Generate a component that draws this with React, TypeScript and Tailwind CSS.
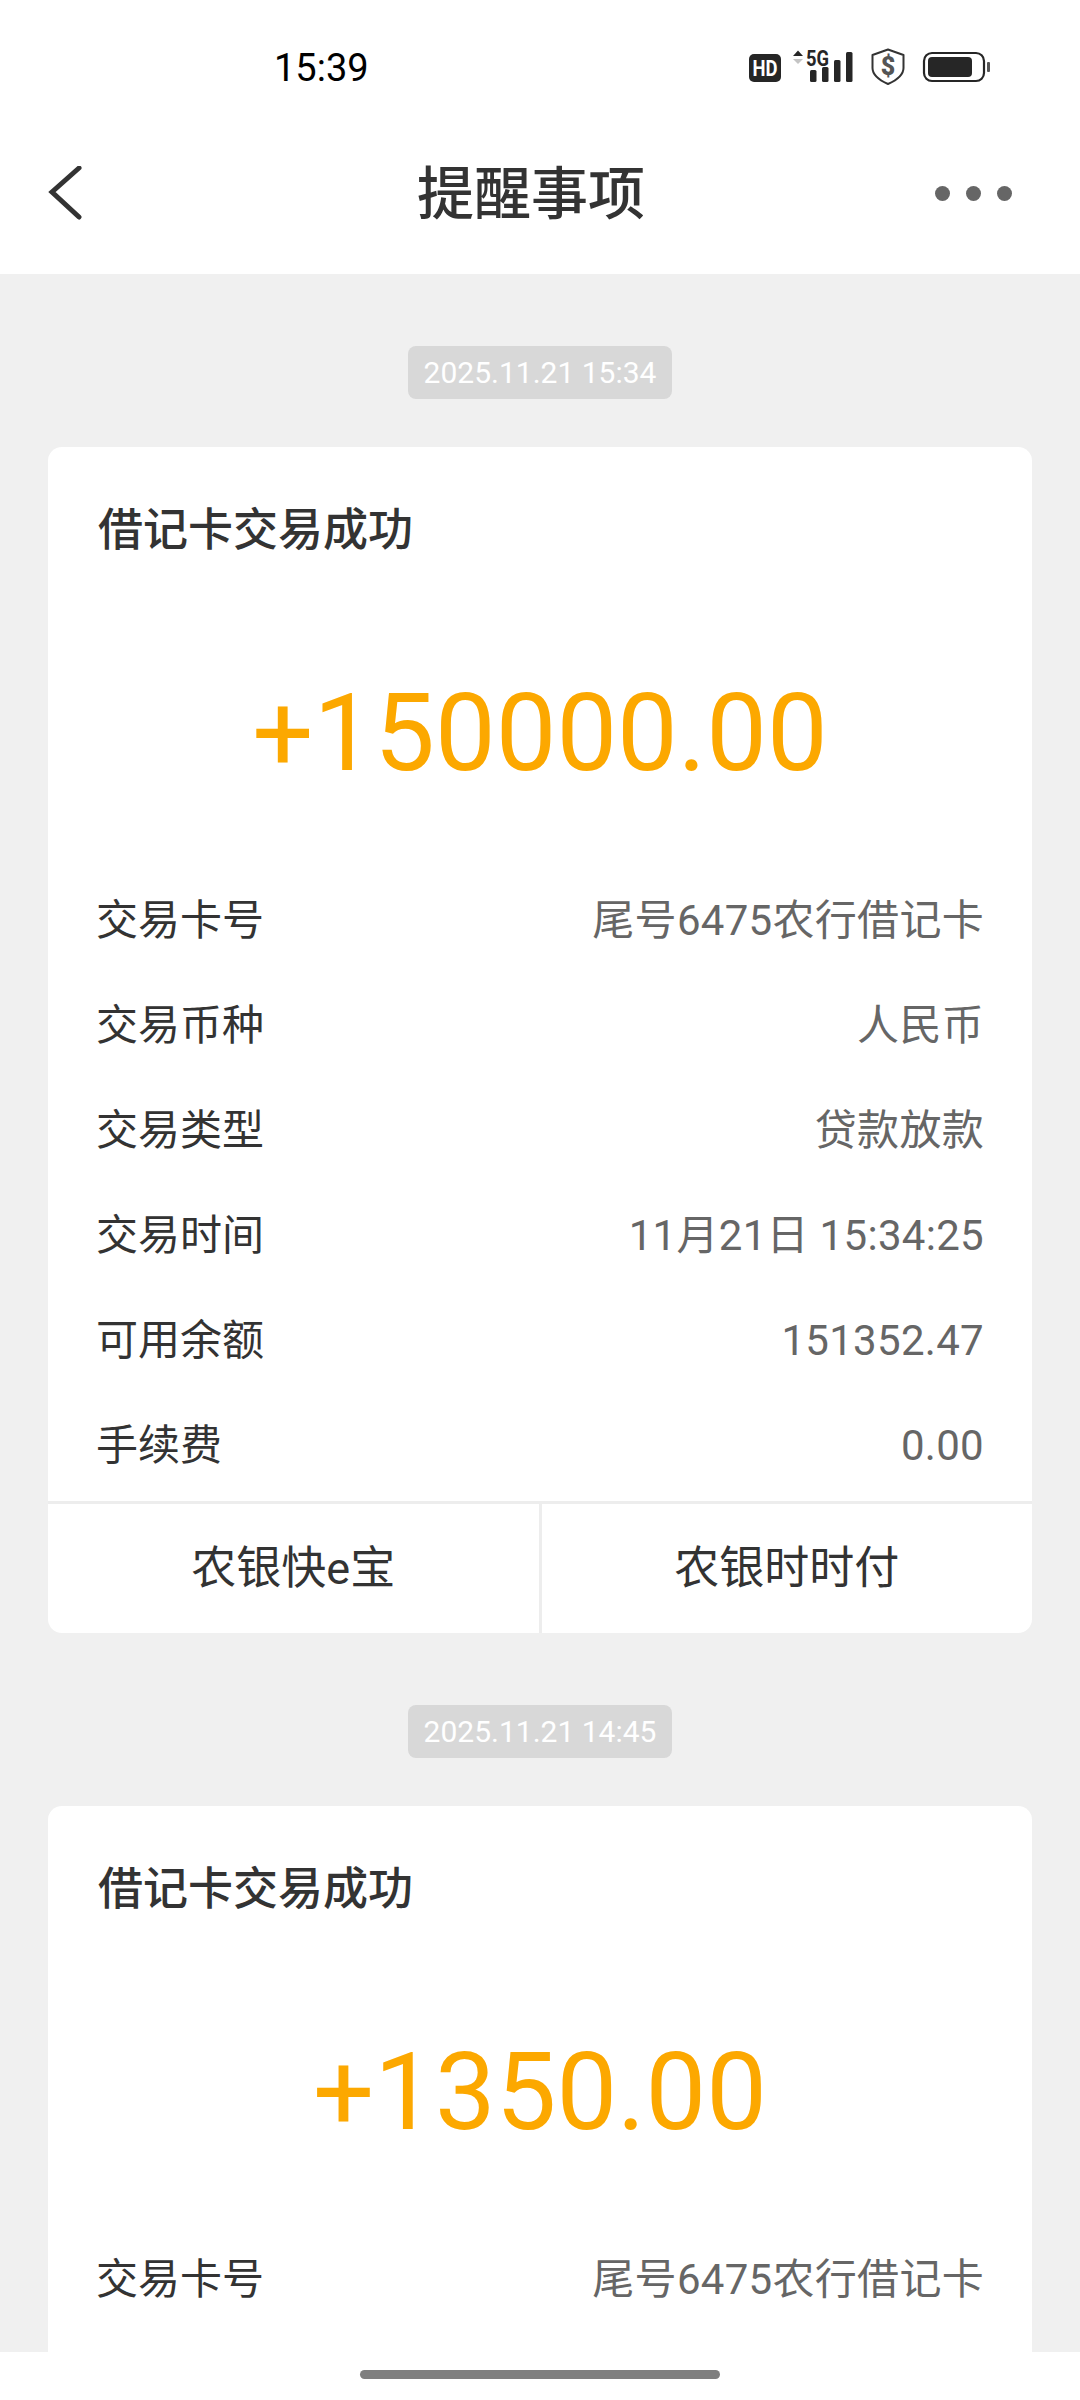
const CJK = "font-['Roboto','Noto_Sans_CJK_SC',sans-serif]";

function Row({ label, value }: { label: string; value: string }) {
  return (
    <div className="flex h-[105px] items-center justify-between pr-[48px] pl-[48px]">
      <span className="text-[42px] leading-none text-[#333333]">{label}</span>
      <span className="text-[42px] leading-none tracking-[0.3px] text-[#666666]">{value}</span>
    </div>
  );
}

function Chip({ text }: { text: string }) {
  return (
    <div className="flex justify-center">
      <div className="flex h-[53px] w-[264px] items-center justify-center rounded-[8px] bg-[#d8d8d8] pt-[1px] text-[30px] leading-none text-white">
        {text}
      </div>
    </div>
  );
}

function Card({ amount, rows, actions }: { amount: string; rows: [string, string][]; actions: boolean }) {
  return (
    <div className="mx-[48px] overflow-hidden rounded-[14px] bg-white">
      <div className="flex h-[166px] items-center px-[50px] text-[45px] leading-none font-medium text-[#333333]">借记卡交易成功</div>
      <div className="flex h-[234px] items-center justify-center pt-[5px] text-[108px] leading-none text-[#fca800]">{amount}</div>
      <div className="pt-[21px]">
        {rows.map(([l, v]) => (
          <Row key={l} label={l} value={v} />
        ))}
      </div>
      {actions ? (
        <div className="mt-[3px] flex h-[132px] border-t-[3px] border-[#ededed]">
          <div className="flex flex-1 items-center justify-center border-r-[3px] border-[#ededed] text-[45px] leading-none text-[#333333]">农银快e宝</div>
          <div className="flex flex-1 items-center justify-center text-[45px] leading-none text-[#333333]">农银时时付</div>
        </div>
      ) : (
        <div className="h-[120px]" />
      )}
    </div>
  );
}

function StatusIcons() {
  return (
    <svg width="242" height="48" viewBox="0 -4 242 48" className="block">
      <rect x="0" y="6" width="32" height="28" rx="5" fill="#262626" />
      <text x="16" y="28" textAnchor="middle" fontSize="22" fontWeight="700" fontFamily="Roboto" fill="#fff" textLength="25" lengthAdjust="spacingAndGlyphs">HD</text>
      <path d="M44 8 L49 2.5 L54 8 Z" fill="#262626" />
      <path d="M44 11 L49 16 L54 11 Z" fill="#c4c4c4" />
      <text x="57" y="18" fontSize="22" fontWeight="700" fontFamily="Roboto" fill="#262626" textLength="23" lengthAdjust="spacingAndGlyphs">5G</text>
      <rect x="61" y="22" width="6.5" height="12" rx="1.5" fill="#262626" />
      <rect x="73" y="19" width="6.5" height="15" rx="1.5" fill="#262626" />
      <rect x="85" y="12" width="6.5" height="22" rx="1.5" fill="#262626" />
      <rect x="97" y="4" width="6.5" height="30" rx="1.5" fill="#262626" />
      <path d="M139 1.5 L154.5 7 V20 C154.5 27 148 32 139 36 C130 32 123.5 27 123.5 20 V7 Z" fill="none" stroke="#333" strokeWidth="2" strokeLinejoin="round" />
      <text x="139" y="27" textAnchor="middle" fontSize="25" fontWeight="900" fontFamily="Roboto" fill="#555">$</text>
      <rect x="175" y="5" width="60" height="28" rx="8" fill="none" stroke="#262626" strokeWidth="2.2" />
      <rect x="179" y="9" width="44" height="20" rx="4" fill="#262626" />
      <rect x="238" y="14" width="3" height="10" rx="1" fill="#555" />
    </svg>
  );
}

export default function App() {
  const first: [string, string][] = [
    ["交易卡号", "尾号6475农行借记卡"],
    ["交易币种", "人民币"],
    ["交易类型", "贷款放款"],
    ["交易时间", "11月21日 15:34:25"],
    ["可用余额", "151352.47"],
    ["手续费", "0.00"],
  ];
  return (
    <div className={`relative h-[2400px] w-[1080px] overflow-hidden bg-[#f0f0f0] ${CJK}`}>
      <div className="bg-white">
        <div className="flex h-[134px] items-center justify-between pt-[1px] pr-[89px] pl-[274px]">
          <span className="text-[38px] leading-none text-black">15:39</span>
          <StatusIcons />
        </div>
        <div className="flex h-[140px] items-center pr-[68px] pb-[20px] pl-[48px]">
          <svg width="34" height="56" viewBox="0 0 34 56" className="shrink-0">
            <path d="M31 2 L4 26 L31 51" fill="none" stroke="#333" strokeWidth="5" strokeLinecap="round" />
          </svg>
          <span className="ml-[335px] text-[57px] leading-none font-medium text-[#333333]">提醒事项</span>
          <div className="ml-auto flex gap-[16px] pb-[2px]">
            <span className="h-[15px] w-[15px] rounded-full bg-[#666666]" />
            <span className="h-[15px] w-[15px] rounded-full bg-[#666666]" />
            <span className="h-[15px] w-[15px] rounded-full bg-[#666666]" />
          </div>
        </div>
      </div>
      <div className="flex flex-col pt-[72px]">
        <Chip text="2025.11.21 15:34" />
        <div className="h-[48px]" />
        <Card amount="+150000.00" rows={first} actions />
        <div className="h-[72px]" />
        <Chip text="2025.11.21 14:45" />
        <div className="h-[48px]" />
        <Card amount="+1350.00" rows={first.slice(0, 1)} actions={false} />
      </div>
      <div className="absolute inset-x-0 bottom-0 flex h-[48px] justify-center bg-white pt-[18px]">
        <div className="h-[9px] w-[360px] rounded-full bg-[#7f7f7f]" />
      </div>
    </div>
  );
}
